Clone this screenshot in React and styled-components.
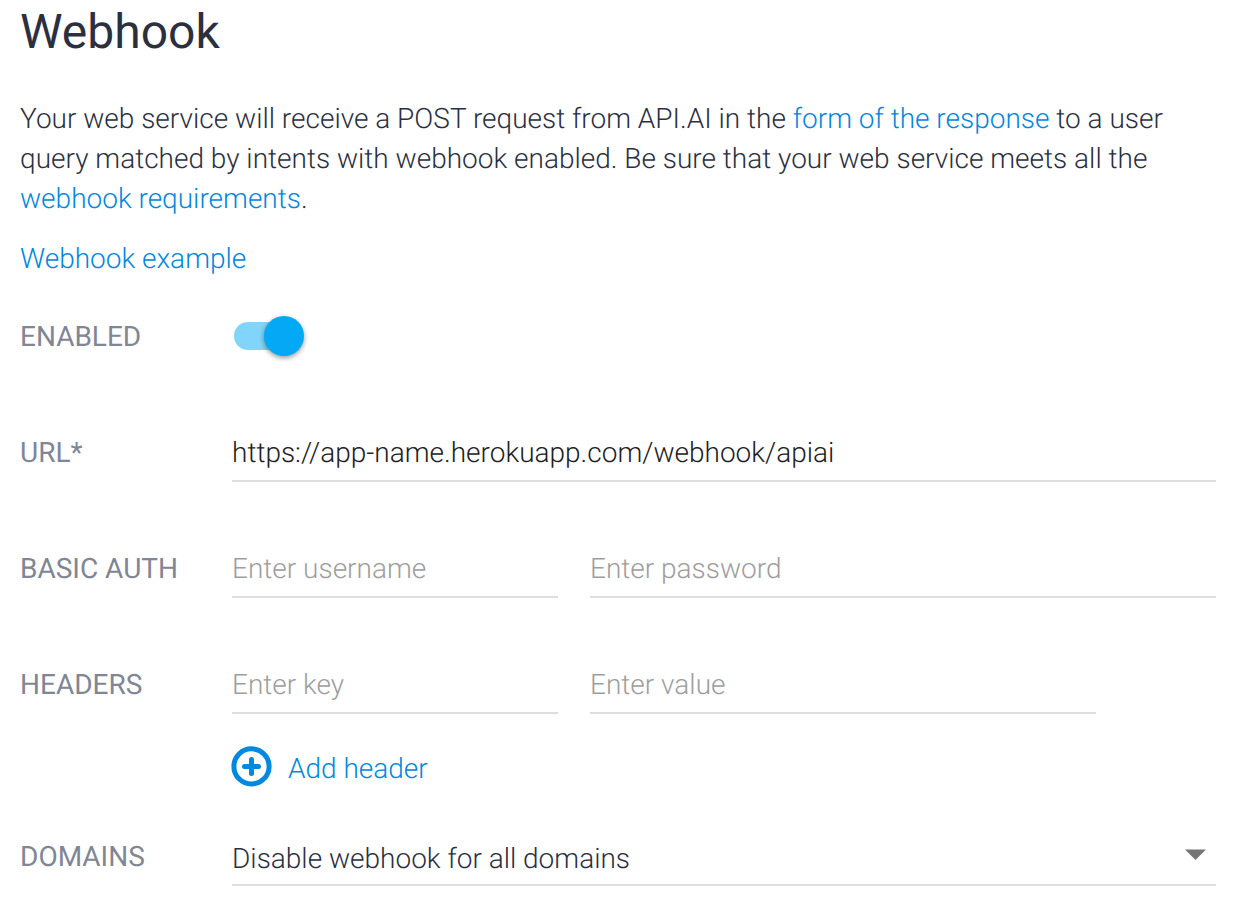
import React, { useState } from "react";
import styled, { createGlobalStyle } from "styled-components";

const Global = createGlobalStyle`
  * { box-sizing: border-box; }
  body {
    margin: 0;
    background: #fff;
    color: #2b303f;
    font-family: Roboto, "Liberation Sans", sans-serif;
    font-size: 28px;
    font-weight: 300;
    line-height: 40px;
    text-rendering: geometricPrecision;
  }
`;

const Page = styled.main`
  padding: 0 38px 28px 20px;
`;

const Title = styled.h1`
  margin: 0 0 39px;
  padding-top: 4px;
  font-size: 48px;
  font-weight: 400;
  line-height: 56px;
`;

const Intro = styled.p`
  margin: 0 0 20px;
`;

const Link = styled.a`
  color: #0288dc;
  text-decoration: none;
`;

const Form = styled.form`
  display: flex;
  flex-direction: column;
  padding-top: 9px;
`;

const Row = styled.div`
  display: grid;
  grid-template-columns: 212px 1fr;
  min-height: ${(p) => p.$height}px;
`;

const Label = styled.label`
  padding-top: 9px;
  color: #7f8696;
  font-weight: 400;
`;

const Fields = styled.div`
  display: grid;
  grid-template-columns: ${(p) => (p.$split ? "326px 1fr" : "1fr")};
  column-gap: 32px;
  align-items: start;
  padding-right: ${(p) => (p.$inset ? 120 : 0)}px;
`;

const Input = styled.input`
  width: 100%;
  height: 58px;
  padding: 0;
  border: 0;
  border-bottom: 2px solid #dedede;
  outline: 0;
  background: transparent;
  color: #212121;
  font: inherit;
  text-rendering: inherit;
  &::placeholder { color: #9e9e9e; opacity: 1; }
`;

const Toggle = styled.input`
  appearance: none;
  display: flex;
  align-items: center;
  width: 68px;
  height: 28px;
  margin: 14px 2px;
  border-radius: 14px;
  background: #81d4fa;
  cursor: pointer;
  &::before {
    content: "";
    width: 40px;
    height: 40px;
    flex: none;
    border-radius: 50%;
    background: #03a9f4;
    box-shadow: 0 2px 5px rgba(0, 0, 0, 0.4);
  }
  &:checked::before { margin-left: 30px; }
`;

const AddButton = styled.button`
  display: flex;
  align-items: flex-start;
  gap: 16px;
  justify-self: start;
  align-self: start;
  padding: 0;
  border: 0;
  background: none;
  color: #0288dc;
  font: inherit;
  line-height: 46px;
  text-rendering: inherit;
  cursor: pointer;
`;

const SelectBox = styled.div`
  position: relative;
`;

const Select = styled.select`
  appearance: none;
  width: 100%;
  height: 58px;
  padding: 6px 40px 0 0;
  border: 0;
  border-bottom: 2px solid #dedede;
  border-radius: 0;
  outline: 0;
  background: transparent;
  color: #2b303f;
  font: inherit;
  text-rendering: inherit;
`;

const Arrow = styled.svg`
  position: absolute;
  top: 21px;
  right: 10px;
  pointer-events: none;
`;

export default function App() {
  const [enabled, setEnabled] = useState(true);
  return (
    <>
      <Global />
      <Page>
        <Title>Webhook</Title>
        <Intro>
          Your web service will receive a POST request from API.AI in the{" "}
          <Link href="#response">form of the response</Link> to a user query
          matched by intents with webhook enabled. Be sure that your web service
          meets all the <Link href="#requirements">webhook requirements</Link>.
        </Intro>
        <Intro>
          <Link href="#example">Webhook example</Link>
        </Intro>
        <Form>
          <Row $height={116}>
            <Label htmlFor="enabled">ENABLED</Label>
            <Toggle
              id="enabled"
              type="checkbox"
              role="switch"
              checked={enabled}
              onChange={(e) => setEnabled(e.target.checked)}
            />
          </Row>
          <Row $height={116}>
            <Label htmlFor="url">URL*</Label>
            <Fields>
              <Input id="url" defaultValue="https://app-name.herokuapp.com/webhook/apiai" />
            </Fields>
          </Row>
          <Row $height={116}>
            <Label htmlFor="username">BASIC AUTH</Label>
            <Fields $split>
              <Input id="username" placeholder="Enter username" />
              <Input type="password" aria-label="Password" placeholder="Enter password" />
            </Fields>
          </Row>
          <Row $height={90}>
            <Label htmlFor="key">HEADERS</Label>
            <Fields $split $inset>
              <Input id="key" placeholder="Enter key" />
              <Input aria-label="Header value" placeholder="Enter value" />
            </Fields>
          </Row>
          <Row $height={82}>
            <span />
            <AddButton type="button">
              <svg width="40" height="41" viewBox="0 0 40 41" overflow="visible" fill="none" stroke="currentColor" strokeWidth="5" strokeLinecap="round" aria-hidden="true">
                <circle cx="19.5" cy="20.4" r="17.6" />
                <path d="M19.5 13.4v14M12.5 20.4h14" />
              </svg>
              Add header
            </AddButton>
          </Row>
          <Row $height={58}>
            <Label htmlFor="domains">DOMAINS</Label>
            <SelectBox>
              <Select id="domains">
                <option>Disable webhook for all domains</option>
              </Select>
              <Arrow width="21" height="11" viewBox="0 0 21 11" aria-hidden="true">
                <path d="M0 .6h21L10.5 11z" fill="#757575" />
              </Arrow>
            </SelectBox>
          </Row>
        </Form>
      </Page>
    </>
  );
}
